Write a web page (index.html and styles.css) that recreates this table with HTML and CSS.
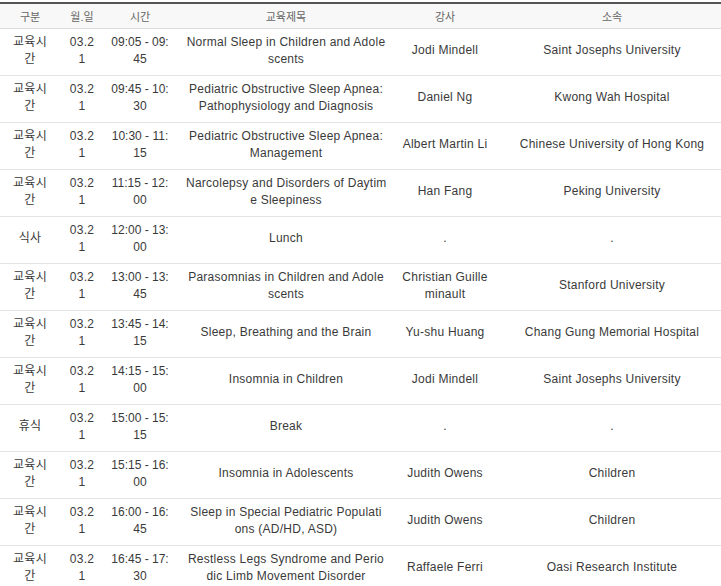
FILE: index.html
```html
<!DOCTYPE html>
<html lang="ko">
<head>
<meta charset="utf-8">
<title>교육일정</title>
<link rel="stylesheet" href="styles.css">
</head>
<body>
<div class="wrap">
<table class="schedule">
<colgroup>
<col class="c-type"><col class="c-date"><col class="c-time"><col class="c-title"><col class="c-lect"><col class="c-org">
</colgroup>
<thead>
<tr><th>구분</th><th>월.일</th><th>시간</th><th>교육제목</th><th>강사</th><th>소속</th></tr>
</thead>
<tbody>
<tr><td><div class="cell">교육시<br>간</div></td><td><div class="cell">03.2<br>1</div></td><td class="time"><div class="cell">09:05 - 09:<br>45</div></td><td class="title"><div class="cell">Normal Sleep in Children and Adole<br>scents</div></td><td class="lect"><div class="cell">Jodi Mindell</div></td><td><div class="cell">Saint Josephs University</div></td></tr>
<tr><td><div class="cell">교육시<br>간</div></td><td><div class="cell">03.2<br>1</div></td><td class="time"><div class="cell">09:45 - 10:<br>30</div></td><td class="title"><div class="cell">Pediatric Obstructive Sleep Apnea:<br>Pathophysiology and Diagnosis</div></td><td class="lect"><div class="cell">Daniel Ng</div></td><td><div class="cell">Kwong Wah Hospital</div></td></tr>
<tr><td><div class="cell">교육시<br>간</div></td><td><div class="cell">03.2<br>1</div></td><td class="time"><div class="cell">10:30 - 11:<br>15</div></td><td class="title"><div class="cell">Pediatric Obstructive Sleep Apnea:<br>Management</div></td><td class="lect"><div class="cell">Albert Martin Li</div></td><td><div class="cell">Chinese University of Hong Kong</div></td></tr>
<tr><td><div class="cell">교육시<br>간</div></td><td><div class="cell">03.2<br>1</div></td><td class="time"><div class="cell">11:15 - 12:<br>00</div></td><td class="title"><div class="cell">Narcolepsy and Disorders of Daytim<br>e Sleepiness</div></td><td class="lect"><div class="cell">Han Fang</div></td><td><div class="cell">Peking University</div></td></tr>
<tr><td><div class="cell">식사</div></td><td><div class="cell">03.2<br>1</div></td><td class="time"><div class="cell">12:00 - 13:<br>00</div></td><td class="title"><div class="cell">Lunch</div></td><td class="lect"><div class="cell">.</div></td><td><div class="cell">.</div></td></tr>
<tr><td><div class="cell">교육시<br>간</div></td><td><div class="cell">03.2<br>1</div></td><td class="time"><div class="cell">13:00 - 13:<br>45</div></td><td class="title"><div class="cell">Parasomnias in Children and Adole<br>scents</div></td><td class="lect"><div class="cell">Christian Guille<br>minault</div></td><td><div class="cell">Stanford University</div></td></tr>
<tr><td><div class="cell">교육시<br>간</div></td><td><div class="cell">03.2<br>1</div></td><td class="time"><div class="cell">13:45 - 14:<br>15</div></td><td class="title"><div class="cell">Sleep, Breathing and the Brain</div></td><td class="lect"><div class="cell">Yu-shu Huang</div></td><td><div class="cell">Chang Gung Memorial Hospital</div></td></tr>
<tr><td><div class="cell">교육시<br>간</div></td><td><div class="cell">03.2<br>1</div></td><td class="time"><div class="cell">14:15 - 15:<br>00</div></td><td class="title"><div class="cell">Insomnia in Children</div></td><td class="lect"><div class="cell">Jodi Mindell</div></td><td><div class="cell">Saint Josephs University</div></td></tr>
<tr><td><div class="cell">휴식</div></td><td><div class="cell">03.2<br>1</div></td><td class="time"><div class="cell">15:00 - 15:<br>15</div></td><td class="title"><div class="cell">Break</div></td><td class="lect"><div class="cell">.</div></td><td><div class="cell">.</div></td></tr>
<tr><td><div class="cell">교육시<br>간</div></td><td><div class="cell">03.2<br>1</div></td><td class="time"><div class="cell">15:15 - 16:<br>00</div></td><td class="title"><div class="cell">Insomnia in Adolescents</div></td><td class="lect"><div class="cell">Judith Owens</div></td><td><div class="cell">Children</div></td></tr>
<tr><td><div class="cell">교육시<br>간</div></td><td><div class="cell">03.2<br>1</div></td><td class="time"><div class="cell">16:00 - 16:<br>45</div></td><td class="title"><div class="cell">Sleep in Special Pediatric Populati<br>ons (AD/HD, ASD)</div></td><td class="lect"><div class="cell">Judith Owens</div></td><td><div class="cell">Children</div></td></tr>
<tr><td><div class="cell">교육시<br>간</div></td><td><div class="cell">03.2<br>1</div></td><td class="time"><div class="cell">16:45 - 17:<br>30</div></td><td class="title"><div class="cell">Restless Legs Syndrome and Perio<br>dic Limb Movement Disorder</div></td><td class="lect"><div class="cell">Raffaele Ferri</div></td><td><div class="cell">Oasi Research Institute</div></td></tr>
</tbody>
</table>
</div>
</body>
</html>
```
FILE: styles.css
```css
html, body {
  margin: 0;
  padding: 0;
  background: #fff;
}

body {
  font-family: "Liberation Sans", "Noto Sans CJK KR", sans-serif;
  font-size: 12px;
  color: #3a3a3a;
  letter-spacing: 0.25px;
}

.wrap {
  width: 721px;
  overflow: hidden;
  padding-top: 2px;
}

.schedule {
  width: 730px;
  table-layout: fixed;
  border-collapse: separate;
  border-spacing: 0;
}

.c-type { width: 60px; }
.c-date { width: 44px; }
.c-time { width: 72px; }
.c-title { width: 220px; }
.c-lect { width: 98px; }
.c-org { width: 236px; }

.schedule th {
  box-sizing: border-box;
  height: 27px;
  padding: 0 0 1px;
  background: #f8f8f8;
  border-top: 2px solid #555;
  border-bottom: 1px solid #dcdcdc;
  font-weight: normal;
  font-size: 11px;
  color: #666;
  text-align: center;
  vertical-align: middle;
  letter-spacing: 0;
}

.schedule td {
  box-sizing: border-box;
  height: 47px;
  padding: 0 7px 3px;
  border-bottom: 1px solid #e4e4e4;
  text-align: center;
  vertical-align: middle;
  line-height: 17px;
}

.schedule td.time {
  padding: 0 6px 3px;
  letter-spacing: 0;
}

.schedule td.title {
  padding: 0 10px 3px;
}

.schedule td.lect {
  padding: 0 5px 3px;
}

.cell {
  overflow: hidden;
  white-space: nowrap;
}
```
